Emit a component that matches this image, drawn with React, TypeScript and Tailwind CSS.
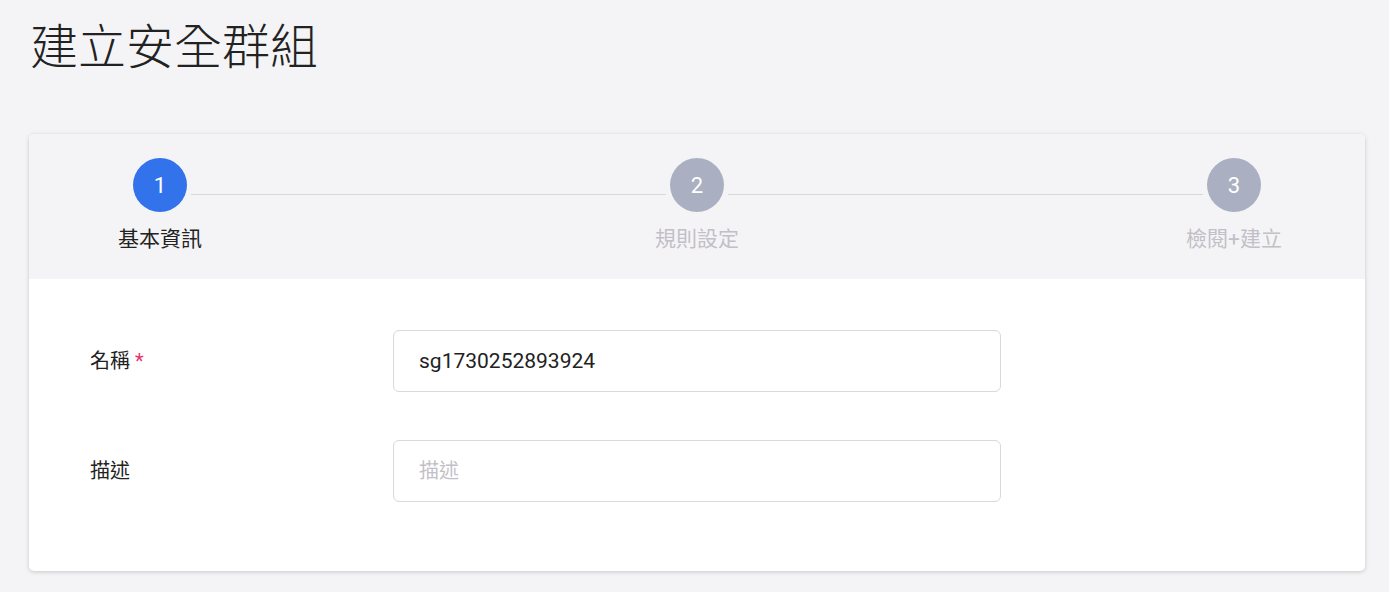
const font = { fontFamily: 'Roboto, "Noto Sans CJK TC", sans-serif' }

const steps = [
  { n: 1, label: '基本資訊', active: true },
  { n: 2, label: '規則設定', active: false },
  { n: 3, label: '檢閱+建立', active: false },
]

function Step({ n, label, active }: { n: number; label: string; active: boolean }) {
  return (
    <div className="w-[54px] flex flex-col items-center">
      <div
        className={`w-[54px] h-[54px] rounded-full flex items-center justify-center text-white text-[22px] ${
          active ? 'bg-[#3273eb]' : 'bg-[#aab0c1]'
        }`}
      >
        {n}
      </div>
      <div
        className={`mt-[13px] whitespace-nowrap text-[21px] leading-[28px] ${active ? 'text-[#222]' : 'text-[#c3bfc8]'}`}
      >
        {label}
      </div>
    </div>
  )
}

export default function App() {
  return (
    <div className="min-h-screen bg-[#f4f4f6] pl-[29px] pr-[24px] pt-[18px] pb-5 text-[#222]" style={font}>
      <h1 className="pl-[1px] text-[48px] leading-[60px] font-light">建立安全群組</h1>

      <div className="mt-[56px] rounded-[5px] bg-white shadow-[0_1px_4px_rgba(0,0,0,0.18)] overflow-hidden">
        <div className="bg-[#f4f4f6] px-[104px] pt-[24px] pb-[26px] flex items-start">
          {steps.map((s, i) => (
            <div key={s.n} className={`flex items-start ${i < steps.length - 1 ? 'flex-1' : ''}`}>
              <Step {...s} />
              {i < steps.length - 1 && <div className="flex-1 h-px bg-[#d8d8dc] mt-[36px] mx-1" />}
            </div>
          ))}
        </div>

        <div className="px-[61px] pt-[51px] pb-[69px] space-y-[48px]">
          <div className="flex items-center">
            <label className="w-[303px] text-[20px] text-[#222]">
              名稱 <span className="text-[#e8336c]">*</span>
            </label>
            <input
              type="text"
              defaultValue="sg1730252893924"
              className="w-[608px] h-[62px] rounded-[6px] border border-[#d9d9dc] px-[25px] text-[21px] text-[#222] outline-none"
            />
          </div>
          <div className="flex items-center">
            <label className="w-[303px] text-[20px] text-[#222]">描述</label>
            <input
              type="text"
              placeholder="描述"
              className="w-[608px] h-[62px] rounded-[6px] border border-[#d9d9dc] px-[25px] text-[20px] text-[#222] placeholder:text-[#c3bfc8] outline-none"
            />
          </div>
        </div>
      </div>
    </div>
  )
}
